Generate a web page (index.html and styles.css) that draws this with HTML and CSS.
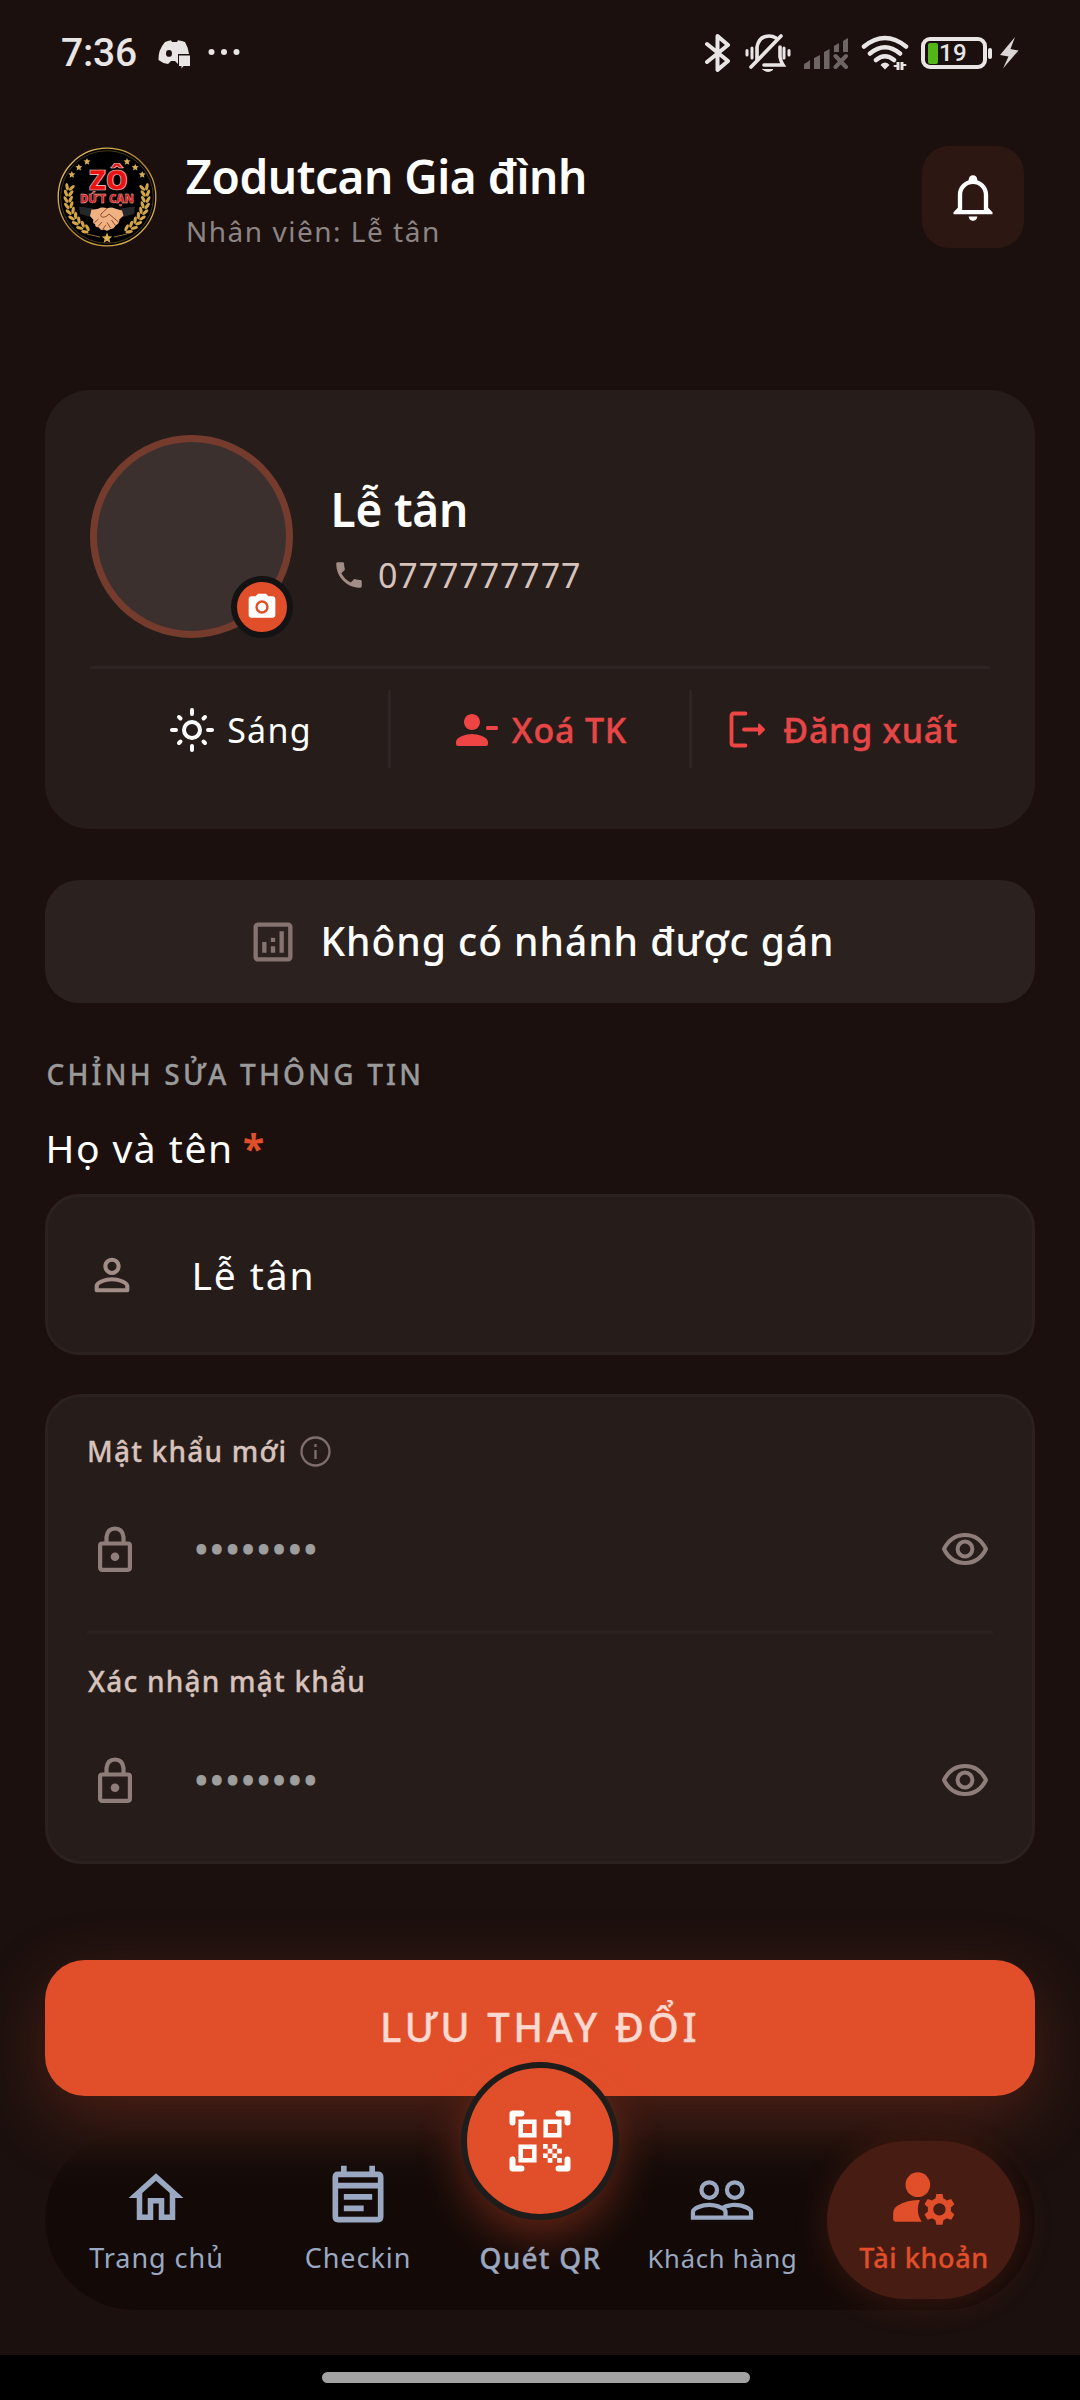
FILE: index.html
```html
<!DOCTYPE html>
<html lang="vi">
<head>
<meta charset="utf-8">
<title>Tài khoản</title>
<link rel="stylesheet" href="styles.css">
</head>
<body>
<div class="screen">
  <div class="status">
    <span class="clock">7:36</span>
    <svg class="st-discord" width="33" height="29" viewBox="0 0 33 29"><path fill="#e9e5e4" fill-rule="evenodd" d="M7 2Q10 .6 13 .2L14 2H19L20 .2Q24 .6 27 2Q30 7 31 14H20V24L17 21H13L10 24Q4 23 .5 20Q0 10 7 2ZM11 10A3 3.400 0 1 0 11 16.800A3 3.400 0 1 0 11 10Z"/><path fill="#e9e5e4" d="M21 15.500H32V26H25.500L23.500 28.500V26H21Z"/></svg>
    <svg class="st-dots" width="32" height="8" viewBox="0 0 32 8" fill="#e9e5e4"><circle cx="3.500" cy="4" r="3"/><circle cx="16" cy="4" r="3"/><circle cx="28.500" cy="4" r="3"/></svg>
    <span class="grow"></span>
    <svg width="26" height="40" viewBox="0 0 26 40" fill="none" stroke="#e9e5e4" stroke-width="4" stroke-linecap="round" stroke-linejoin="round"><path d="M2 11L23 28L12.500 37V3L23 12L2 29"/></svg>
    <svg class="st-mute" width="46" height="40" viewBox="0 0 46 40" fill="none" stroke="#e9e5e4" stroke-width="3.600" stroke-linecap="round"><path d="M2 17.500V22M7 15V25M39 15V25M44 17.500V22" stroke-width="3"/><path d="M12 27V14Q14 3 24 3Q28 3 31 5M35 14V24Q36 29 38 32H19"/><path d="M36 3L6 34"/><path d="M18 36.500H28Q23 40.500 18 36.500Z" stroke-width="1" fill="#e9e5e4"/></svg>
    <svg class="st-signal" width="46" height="31" viewBox="0 0 46 31" fill="#6d6665"><path d="M1 31V27Q1 25 3 25L7 22V31ZM11 31V20L17 17V31ZM21 31V14L26.500 11V31ZM31 14V8L36 5V14ZM40 14V3L45 0V14Z"/><path d="M32.500 18L43 29M43 18L32.500 29" stroke="#6d6665" stroke-width="4" stroke-linecap="round"/></svg>
    <svg class="st-wifi" width="48" height="36" viewBox="0 0 48 36" fill="none" stroke="#e9e5e4" stroke-width="4.500" stroke-linecap="round"><path d="M3 11.500Q24-5.500 45 11.500M9 18.500Q24 6 39 18.500M15 25Q24 17.500 33 25"/><path d="M24 27.500Q27 27.500 28.500 30L24 34.500L19.500 30Q21 27.500 24 27.500Z" fill="#e9e5e4" stroke="none"/><path d="M37 27V35M41 27V35" stroke-width="3" stroke-linecap="butt"/><path d="M33.500 31H37M41 30H44.500" stroke-width="2"/></svg>
    <div class="battery"><span class="charge"></span><span class="pct">19</span></div>
    <span class="nub"></span>
    <svg class="st-bolt" width="19" height="32" viewBox="0 0 19 32" fill="#d9d6d5"><path d="M15 0L0 18L8.500 19.500L3 31.500L18.500 13.500L10.500 12Z"/></svg>
  </div>

  <header class="header">
    <svg class="logo" width="100" height="100" viewBox="0 0 100 100">
      <defs>
        <linearGradient id="gold" x1="0" y1="0" x2="1" y2="1"><stop offset="0" stop-color="#f3d074"/><stop offset=".5" stop-color="#b98a2c"/><stop offset="1" stop-color="#e6bd5c"/></linearGradient>
        <path id="star" fill="#d9b04f" d="M0-3.600L1-1.200L3.500-1L1.600.700L2.200 3.200L0 1.900L-2.200 3.200L-1.600.700L-3.500-1L-1-1.200Z"/>
        <g id="leaf" fill="#d2a546"><ellipse cx="8.800" cy="49" rx="1.600" ry="3.700" transform="rotate(-24 8.800 49)"/><ellipse cx="13.600" cy="49" rx="1.600" ry="3.700" transform="rotate(32 13.600 49)"/></g>
        <g id="laurel"><use href="#leaf" transform="rotate(13 50 50)"/><use href="#leaf" transform="rotate(4 50 50)"/><use href="#leaf" transform="rotate(-5 50 50)"/><use href="#leaf" transform="rotate(-14 50 50)"/><use href="#leaf" transform="rotate(-23 50 50)"/><use href="#leaf" transform="rotate(-32 50 50)"/><use href="#leaf" transform="rotate(-41 50 50)"/><use href="#leaf" transform="rotate(-50 50 50)"/><use href="#leaf" transform="rotate(-59 50 50)"/><use href="#star" x="30" y="14.500"/><use href="#star" x="21.800" y="20.300"/><use href="#star" x="14.800" y="27.500"/></g>
      </defs>
      <circle cx="50" cy="50" r="48.800" fill="#000" stroke="url(#gold)" stroke-width="1.300"/>
      <circle cx="50" cy="50" r="46.300" fill="none" stroke="#7a5d22" stroke-width=".6"/>
      <use href="#laurel"/><use href="#laurel" transform="matrix(-1 0 0 1 100 0)"/>
      <path d="M22 59.500L36 61.500L34 70L23 67ZM78 59.500L63 61.500L66 70L77 67Z" fill="#26272b"/>
      <path d="M34.500 62.500Q40 63 44 60.500Q48 60 50 61.500Q54 59.500 58 61.500L65 63.500L66.500 68.500L62.500 73Q62 77 58.500 78.500Q57 82 53.500 82Q50 85 47 82.500Q43 84 42 80.500Q38 80.500 38 77Q35 76 36.500 73L33 69Z" fill="#f0b283"/>
      <path d="M50 61.500L44 67Q43 71 47.500 70Q50 69.500 52 67L61.500 75M54.500 73L58 78M50 75.500L53.500 81M37.500 75.500L41.500 72M41 79.500L45 75M46 82L49 78M65 70L62 73" fill="none" stroke="#8a4a28" stroke-width="1"/>
      <use href="#star" transform="translate(50 91) scale(1.500)"/><path d="M30 87L43 90M70 87L57 90" stroke="#b98a2c" stroke-width=".8"/>
      <text class="logo-big" x="51.500" y="42.500" text-anchor="middle" textLength="39" lengthAdjust="spacingAndGlyphs">ZÔ</text>
      <text class="logo-small" x="50" y="55.600" text-anchor="middle" textLength="54" lengthAdjust="spacingAndGlyphs">DỨT CẠN</text>
    </svg>
    <div class="who">
      <h1 class="brand">Zodutcan Gia đình</h1>
      <p class="role">Nhân viên: Lễ tân</p>
    </div>
    <button class="bell"><svg width="52" height="52" viewBox="0 0 24 24" fill="#fff"><path d="M10 21H14C14 22.100 13.100 23 12 23S10 22.100 10 21M21 19V20H3V19L5 17V11C5 7.900 7 5.200 10 4.300V4C10 2.900 10.900 2 12 2S14 2.900 14 4V4.300C17 5.200 19 7.900 19 11V17L21 19M17 11C17 8.200 14.800 6 12 6S7 8.200 7 11V18H17V11Z"/></svg></button>
  </header>

  <main class="main">
    <section class="profile">
      <div class="person">
        <div class="avatar"><span class="camera"><svg width="32" height="32" viewBox="0 0 24 24" fill="#fff"><path fill-rule="evenodd" d="M9 2 7.170 4H4c-1.100 0-2 .9-2 2v12c0 1.100.9 2 2 2h16c1.100 0 2-.9 2-2V6c0-1.100-.9-2-2-2h-3.170L15 2H9zM12 17a5 5 0 1 1 0-10a5 5 0 0 1 0 10z"/><circle cx="12" cy="12" r="3.200"/></svg></span></div>
        <div class="ident">
          <div class="name">Lễ tân</div>
          <div class="phone"><svg width="34" height="34" viewBox="0 0 24 24" fill="#a18c86"><path d="M6.620 10.790c1.440 2.830 3.760 5.140 6.590 6.590l2.200-2.200c.27-.27.67-.36 1.020-.24 1.120.37 2.330.57 3.570.57.55 0 1 .45 1 1V20c0 .55-.45 1-1 1-9.390 0-17-7.610-17-17 0-.55.45-1 1-1h3.500c.55 0 1 .45 1 1 0 1.250.2 2.450.57 3.570.11.35.03.74-.25 1.020l-2.200 2.200z"/></svg><span>0777777777</span></div>
        </div>
      </div>
      <div class="actions">
        <div class="action light"><svg width="44" height="44" viewBox="0 0 44 44" fill="none" stroke="#fff" stroke-width="4" stroke-linecap="round"><circle cx="22" cy="22" r="8"/><path d="M22 2V6M22 38V42M2 22H6M38 22H42M9 9L10.500 10.500M33.500 33.500L35 35M9 35L10.500 33.500M33.500 10.500L35 9"/></svg><span>Sáng</span></div>
        <div class="action danger remove"><svg width="48" height="48" viewBox="0 0 24 24" fill="#ee4444"><path d="M14 8c0-2.210-1.790-4-4-4S6 5.790 6 8s1.790 4 4 4 4-1.790 4-4zM17.500 10q-.5 0-.5 1t.5 1h5q.5 0 .5-1t-.5-1zM2 18v1q0 1 1 1h14q1 0 1-1v-1c0-2.660-5.330-4-8-4s-8 1.340-8 4z"/></svg><span>Xoá TK</span></div>
        <div class="action danger logout"><svg width="37" height="37" viewBox="0 0 37 37" fill="none" stroke="#ee4444" stroke-width="3.800" stroke-linecap="round" stroke-linejoin="round"><path d="M16.500 2.500H5Q2.500 2.500 2.500 5V32Q2.500 34.500 5 34.500H16.500M15 18.500H29"/><path d="M30 13.500L35 18.500L30 23.500Z" fill="#ee4444" stroke-width="2"/></svg><span>Đăng xuất</span></div>
      </div>
    </section>

    <div class="branch"><svg width="52" height="52" viewBox="0 0 24 24" fill="#85736f"><path fill-rule="evenodd" d="M19 3H5c-1.100 0-2 .9-2 2v14c0 1.100.9 2 2 2h14c1.100 0 2-.9 2-2V5c0-1.100-.9-2-2-2zM19 19H5V5h14z"/><path d="M7 12h2v5H7zM15 7h2v10h-2zM11 14h2v3h-2zM11 10h2v2h-2z"/></svg><span>Không có nhánh được gán</span></div>

    <h2 class="section">CHỈNH SỬA THÔNG TIN</h2>
    <label class="label"><span>Họ và tên</span> <b>*</b></label>
    <div class="input"><svg width="52" height="52" viewBox="0 0 24 24" fill="#a18c86"><path d="M12 5.900c1.160 0 2.100.94 2.100 2.100s-.94 2.100-2.100 2.100S9.900 9.160 9.900 8s.94-2.100 2.100-2.100m0 9c2.970 0 6.100 1.460 6.100 2.100v1.100H5.900V17c0-.64 3.130-2.100 6.100-2.100M12 4C9.790 4 8 5.790 8 8s1.790 4 4 4 4-1.790 4-4-1.790-4-4-4zm0 9c-2.670 0-8 1.340-8 4v2q0 1 1 1h14q1 0 1-1v-2c0-2.660-5.330-4-8-4z"/></svg><span>Lễ tân</span></div>

    <section class="passwords">
      <div class="pw">
        <div class="pw-label"><span>Mật khẩu mới</span><svg width="31" height="31" viewBox="0 0 31 31" fill="none" stroke="#7f6e6b" stroke-width="2.300"><circle cx="15.500" cy="15.500" r="14"/><path d="M15.500 14V23M15.500 8V11"/></svg></div>
        <div class="pw-row"><svg width="34" height="46" viewBox="0 0 34 46" fill="none" stroke="#8f7d79" stroke-width="4.200"><rect x="2.100" y="17.500" width="29.800" height="26.300" rx="2"/><path d="M8.500 17V11Q9.500 2.500 17 2.500T25.500 11V17"/><circle cx="17" cy="30.700" r="4.300" fill="#8f7d79" stroke="none"/></svg><span class="dots">••••••••</span><svg class="eye" width="48" height="34" viewBox="0 0 48 34" fill="none" stroke="#8f7d79" stroke-width="4"><path d="M3 17Q10 3 24 3T45 17Q38 31 24 31T3 17Z" stroke-linejoin="round"/><circle cx="24" cy="17" r="7.400"/></svg></div>
      </div>
      <div class="pw second">
        <div class="pw-label"><span>Xác nhận mật khẩu</span></div>
        <div class="pw-row"><svg width="34" height="46" viewBox="0 0 34 46" fill="none" stroke="#8f7d79" stroke-width="4.200"><rect x="2.100" y="17.500" width="29.800" height="26.300" rx="2"/><path d="M8.500 17V11Q9.500 2.500 17 2.500T25.500 11V17"/><circle cx="17" cy="30.700" r="4.300" fill="#8f7d79" stroke="none"/></svg><span class="dots">••••••••</span><svg class="eye" width="48" height="34" viewBox="0 0 48 34" fill="none" stroke="#8f7d79" stroke-width="4"><path d="M3 17Q10 3 24 3T45 17Q38 31 24 31T3 17Z" stroke-linejoin="round"/><circle cx="24" cy="17" r="7.400"/></svg></div>
      </div>
    </section>

    <button class="save"><span>LƯU THAY ĐỔI</span></button>
  </main>

  <nav class="nav">
    <a class="tab home"><svg width="66" height="66" viewBox="0 0 24 24" fill="#9aa9c1"><path d="M12 5.690l5 4.500V18h-2v-6H9v6H7v-7.810l5-4.500M12 3L2 12h3v8h6v-6h2v6h6v-8h3L12 3z"/></svg><span class="tab-text">Trang chủ</span></a>
    <a class="tab checkin"><svg width="68" height="68" viewBox="0 0 24 24" fill="#9aa9c1"><path fill-rule="evenodd" d="M6 1H8V3H16V1H18V3H19Q21 3 21 5V19Q21 21 19 21H5Q3 21 3 19V5Q3 3 5 3H6ZM5 5V7H19V5ZM5 9V19H19V9ZM7 10.900H17V13H7ZM7 15H14V17H7Z"/></svg><span class="tab-text">Checkin</span></a>
    <a class="tab scan"><span class="fab"><svg width="62" height="62" viewBox="0 0 62 62" fill="none" stroke="#fff"><path stroke-width="6" stroke-linecap="round" stroke-linejoin="round" d="M3.500 12.500V3.500H12.500M49.500 3.500H58.500V12.500M58.500 49.500V58.500H49.500M12.500 58.500H3.500V49.500"/><path stroke-width="4.500" d="M11.700 11.700H25.300V25.300H11.700ZM36.700 11.700H50.300V25.300H36.700ZM11.700 36.700H25.300V50.300H11.700Z"/><path stroke="none" fill="#fff" d="M34 34h4.700v4.700h-4.700zM43.400 34h4.700v4.700h-4.700zM38.700 38.700h4.700v4.700h-4.700zM48.100 38.700h4.700v4.700h-4.700zM34 43.400h4.700v4.700h-4.700zM43.400 43.400h4.700v4.700h-4.700zM38.700 48.100h4.700v4.700h-4.700zM48.100 48.100h4.700v4.700h-4.700z"/></svg></span><span class="tab-text">Quét QR</span></a>
    <a class="tab guests"><svg width="68" height="68" viewBox="0 0 24 24" fill="#9aa9c1"><path fill-rule="evenodd" d="M16.500 13c-1.200 0-3.070.34-4.500 1-1.430-.67-3.300-1-4.500-1C5.330 13 1 14.080 1 16.250V19h22v-2.750c0-2.170-4.330-3.250-6.500-3.250zM12.500 17.500h-10v-1.250c0-.54 2.560-1.750 5-1.750s5 1.210 5 1.750zM21.500 17.500H14v-1.250c0-.46-.2-.86-.52-1.220.88-.3 1.960-.53 3.020-.53 2.440 0 5 1.210 5 1.750zM7.500 12a3.500 3.500 0 1 0 0-7a3.500 3.500 0 0 0 0 7zM7.500 6.500a2 2 0 1 1 0 4a2 2 0 0 1 0-4zM16.500 12a3.500 3.500 0 1 0 0-7a3.500 3.500 0 0 0 0 7zM16.500 6.500a2 2 0 1 1 0 4a2 2 0 0 1 0-4z"/></svg><span class="tab-text">Khách hàng</span></a>
    <a class="tab active"><svg width="74" height="74" viewBox="0 0 24 24" fill="#e14f2a"><circle cx="10" cy="8" r="4"/><path d="M10.670 13.020C10.450 13.010 10.230 13 10 13c-2.420 0-4.680.67-6.610 1.820C2.510 15.340 2 16.320 2 17.350V19.300q0 .7.7.7h8.560A6.960 6.960 0 0 1 10 16c0-1.070.25-2.070.67-2.980z"/><path fill-rule="evenodd" d="M20.750 16c0-.22-.03-.42-.06-.63l1.140-1.010-1-1.730-1.450.49c-.32-.27-.68-.48-1.080-.63L18 11h-2l-.3 1.490c-.4.15-.76.36-1.080.63l-1.450-.49-1 1.730 1.140 1.010c-.03.21-.06.41-.06.63s.03.42.06.63l-1.140 1.010 1 1.730 1.450-.49c.32.27.68.48 1.080.63L16 21h2l.3-1.490c.4-.15.76-.36 1.080-.63l1.450.49 1-1.730-1.140-1.010c.03-.21.06-.41.06-.63zM17 18a2 2 0 1 1 0-4a2 2 0 0 1 0 4z"/></svg><span class="tab-text">Tài khoản</span></a>
  </nav>

  <div class="gesture"><span class="handle"></span></div>
</div>
</body>
</html>
```
FILE: styles.css
```css
* { box-sizing: border-box; }
body { margin: 0; background: #000; font-family: "Noto Sans", sans-serif; color: #fff; }
h1, h2, p { margin: 0; font-weight: 400; }
button { border: 0; padding: 0; font: inherit; color: inherit; }
svg { display: block; flex: none; }

.screen { width: 1080px; height: 2400px; display: flex; flex-direction: column; background: #1b100e; overflow: hidden; }
.grow { flex: 1; }

/* system status bar */
.status { display: flex; align-items: center; height: 106px; padding: 0 61px; flex: none; }
.clock { font: 500 39px/46px Roboto, sans-serif; letter-spacing: -.2px; color: #e9e5e4; }
.st-discord { margin-left: 21px; margin-top: 2px; }
.st-dots { margin-left: 17px; margin-bottom: 2px; }
.st-mute { margin-left: 14px; }
.st-signal { margin-left: 12px; }
.st-wifi { margin-left: 12px; }
.battery { display: flex; align-items: center; width: 66px; height: 32px; margin-left: 12px; padding-left: 3px; border: 4px solid #e9e5e4; border-radius: 9px; }
.charge { width: 10px; height: 21px; background: #52b518; border-radius: 2px; }
.pct { margin-left: 1px; font: 500 24px/24px Roboto, sans-serif; letter-spacing: .4px; color: #e9e5e4; }
.nub { width: 4px; height: 11px; margin-left: 1px; background: #e9e5e4; border-radius: 2px; }
.st-bolt { margin-left: 8px; }

/* header */
.header { display: flex; align-items: flex-start; height: 102px; margin: 40px 56px 0 57px; flex: none; }
.logo { margin-top: 1px; }
.logo-big { font: 900 28px "Noto Sans", sans-serif; fill: #ee1111; stroke: #e8d5d5; stroke-width: .7px; }
.logo-small { font: 900 11.500px "Noto Sans", sans-serif; fill: #d81616; stroke: #e8c5c5; stroke-width: .4px; }
.who { flex: 1; padding-left: 28.500px; }
.brand { font-size: 46px; line-height: 60px; font-weight: 600; letter-spacing: -.46px; }
.role { font-size: 28px; line-height: 36px; letter-spacing: 1.510px; color: #8c8583; margin: 7px 0 0 .5px; }
.bell { width: 102px; height: 102px; border-radius: 27px; background: #2d1712; display: flex; align-items: center; justify-content: center; }

.main { padding: 142px 45px 0; flex: none; }

/* profile card */
.profile { height: 439px; padding: 45px; border-radius: 45px; background: #261d1b; }
.person { display: flex; height: 231px; }
.avatar { position: relative; width: 203px; height: 203px; border: 7px solid #753c2e; border-radius: 50%; background: #3c302f; }
.camera { position: absolute; right: -7px; bottom: -7px; width: 62px; height: 62px; border: 6px solid #131313; border-radius: 50%; background: #e14f2a; display: flex; align-items: center; justify-content: center; }
.ident { padding: 44px 0 0 37.500px; }
.name { font-size: 46px; line-height: 60px; font-weight: 600; letter-spacing: -.2px; }
.phone { display: flex; align-items: center; gap: 12px; height: 48px; margin: 12px 0 0 1.500px; font-size: 34px; line-height: 48px; letter-spacing: .89px; color: #d8c2bc; }
.actions { display: grid; grid-template-columns: 298px 301px 301px; border-top: 3px solid #2e2423; padding-top: 21px; }
.action { display: flex; align-items: center; justify-content: center; gap: 12px; height: 78px; padding-top: 1px; font-size: 34px; line-height: 48px; letter-spacing: 1.250px; }
.action + .action { border-left: 3px solid #2e2423; }
.light { gap: 13px; padding-left: 4px; }
.danger { color: #e74646; font-weight: 500; -webkit-text-stroke: .4px; }
.remove { letter-spacing: .81px; }
.logout { gap: 17px; padding-left: 6px; letter-spacing: .72px; }
.remove svg, .logout svg { margin-left: -1px; }

.branch { display: flex; align-items: center; justify-content: center; gap: 22px; height: 123px; margin-top: 51px; padding-left: 1px; border-radius: 34px; background: #2b2220; font-size: 39px; line-height: 54px; font-weight: 500; letter-spacing: .97px; }
.branch span { padding-bottom: 2px; }

.section { margin: 52px 0 0 1.500px; font-size: 28px; line-height: 38px; font-weight: 500; letter-spacing: 3.200px; color: #9a9a9a; -webkit-text-stroke: .3px; }
.label { display: block; margin: 28px 0 0 .5px; font-size: 39px; line-height: 54px; letter-spacing: 1.480px; }
.label b { color: #e14f2a; margin-left: -2px; }
.input { display: flex; align-items: center; height: 161px; margin-top: 19px; padding-left: 38px; border: 3px solid #2b2220; border-radius: 34px; background: #261d1b; font-size: 39px; line-height: 54px; letter-spacing: 1.890px; }
.input span { margin-left: 53.500px; }

/* password card */
.passwords { height: 470px; margin-top: 39px; padding: 0 39px; border: 3px solid #2b2220; border-radius: 36px; background: #261d1b; }
.pw { height: 234px; padding-top: 35px; }
.pw.second { height: 230px; padding-top: 28px; border-top: 3px solid #2b2220; }
.pw-label { display: flex; align-items: center; height: 38px; font-size: 28px; line-height: 38px; font-weight: 500; letter-spacing: 1.210px; color: #d8c2bc; -webkit-text-stroke: .3px; }
.second .pw-label { padding-left: 1px; }
.pw-label svg { margin-left: 13px; }
.pw-row { display: flex; align-items: center; height: 54px; margin-top: 52px; padding: 0 4px 0 11px; font-size: 39px; line-height: 54px; }
.second .pw-row { margin-top: 53px; }
.dots { margin-left: 62px; padding-bottom: 2px; letter-spacing: .91px; color: #9e9e9e; -webkit-text-stroke: 1px; }
.eye { margin-left: auto; }

.save { display: flex; align-items: center; justify-content: center; width: 990px; height: 136px; margin-top: 96px; padding-bottom: 3px; border-radius: 40px; background: #e14f2a; color: #ffd8cf; font-size: 40px; font-weight: 500; letter-spacing: 3.510px; -webkit-text-stroke: .3px; box-shadow: 0 22px 70px rgba(225, 79, 42, .26); }

/* bottom navigation */
.nav { position: relative; display: flex; height: 180px; margin: 34px 45px 0; padding: 11px 15px; border-radius: 90px; background: linear-gradient(#2c140e, #21100b 16px, #160c0a 36px, #130a08 60px, #130a08); flex: none; }
.tab { display: flex; flex-direction: column; align-items: center; justify-content: flex-end; padding-bottom: 23px; }
.tab-text { margin-left: 1px; font-size: 27px; line-height: 36px; letter-spacing: .95px; color: #9aa9c1; white-space: nowrap; }
.home { width: 192px; }
.home svg { margin-bottom: 9px; }
.checkin { width: 211px; }
.checkin svg { margin-bottom: 9px; }
.scan { width: 154px; }
.scan .tab-text { font-size: 28px; font-weight: 500; letter-spacing: 1.240px; -webkit-text-stroke: .3px; }
.guests { width: 210px; }
.guests svg { margin-bottom: 6px; }
.guests .tab-text { font-size: 25.500px; letter-spacing: .8px; }
.fab { position: absolute; top: -68px; left: 416px; width: 158px; height: 158px; border: 6px solid #1f1d1b; border-radius: 50%; background: #e14f2a; box-shadow: 0 16px 44px rgba(225, 79, 42, .38); display: flex; align-items: center; justify-content: center; }
.active { width: 193px; border-radius: 79px; background: #471c13; box-shadow: 0 4px 34px rgba(225, 79, 42, .18); }
.active svg { margin-bottom: 6px; }
.active .tab-text { color: #e14f2a; font-weight: 500; letter-spacing: .62px; -webkit-text-stroke: .3px; }

.gesture { display: flex; justify-content: center; align-items: center; height: 45px; margin-top: auto; background: #000; flex: none; }
.handle { width: 428px; height: 11px; border-radius: 6px; background: #a3a3a3; margin-right: 8px; }
```
